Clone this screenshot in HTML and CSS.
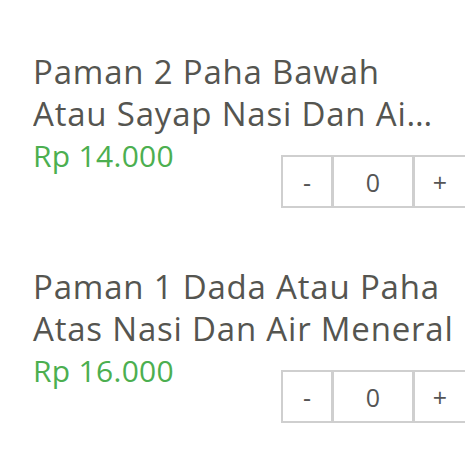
FILE: index.html
```html
<!DOCTYPE html>
<html>
  <head>
    <meta charset="UTF-8" />
    <title>Menu</title>
    <link rel="stylesheet" href="styles.css">
  </head>
  <body>
    <section class="item">
      <h2 class="title">
        <span class="line">Paman 2 Paha Bawah</span>
        <span class="line clip">Atau Sayap Nasi Dan Air Meneral</span>
      </h2>
      <div class="row">
        <p class="price">Rp 14.000</p>
        <div class="stepper">
          <button class="step">-</button>
          <span class="count">0</span>
          <button class="step last">+</button>
        </div>
      </div>
    </section>

    <section class="item">
      <h2 class="title">
        <span class="line">Paman 1 Dada Atau Paha</span>
        <span class="line">Atas Nasi Dan Air Meneral</span>
      </h2>
      <div class="row">
        <p class="price">Rp 16.000</p>
        <div class="stepper">
          <button class="step">-</button>
          <span class="count">0</span>
          <button class="step last">+</button>
        </div>
      </div>
    </section>
  </body>
</html>
```

FILE: styles.css
```css
* {
  margin: 0;
  box-sizing: border-box;
  font-family: "Open Sans", sans-serif;
}

body {
  padding: 51px 0 0 33px;
  overflow: hidden;
  background: #fff;
}

.item {
  margin-bottom: 58px;
}

.title {
  width: 424px;
  font-size: 33px;
  font-weight: 400;
  letter-spacing: 0.8px;
  line-height: 42px;
  color: #555550;
}

.line {
  display: block;
  white-space: nowrap;
}

.clip {
  width: 412px;
  overflow: hidden;
  text-overflow: ellipsis;
}

.row {
  display: flex;
  justify-content: space-between;
  align-items: flex-start;
}

.price {
  font-size: 30px;
  letter-spacing: 0.3px;
  line-height: 36px;
  margin-top: 3px;
  color: #4caf50;
}

.stepper {
  display: flex;
  margin-top: 20px;
}

.step,
.count {
  height: 53px;
  border: 2px solid #cfcfcf;
  background: #fff;
  color: #555;
  font-family: "Open Sans", sans-serif;
  font-size: 25px;
  display: flex;
  align-items: center;
  justify-content: center;
  padding: 0;
}

.step {
  width: 52px;
}

.count {
  width: 80px;
  border-left-width: 1px;
  border-right-width: 1px;
}

.last {
  border-right: 0;
}
```
